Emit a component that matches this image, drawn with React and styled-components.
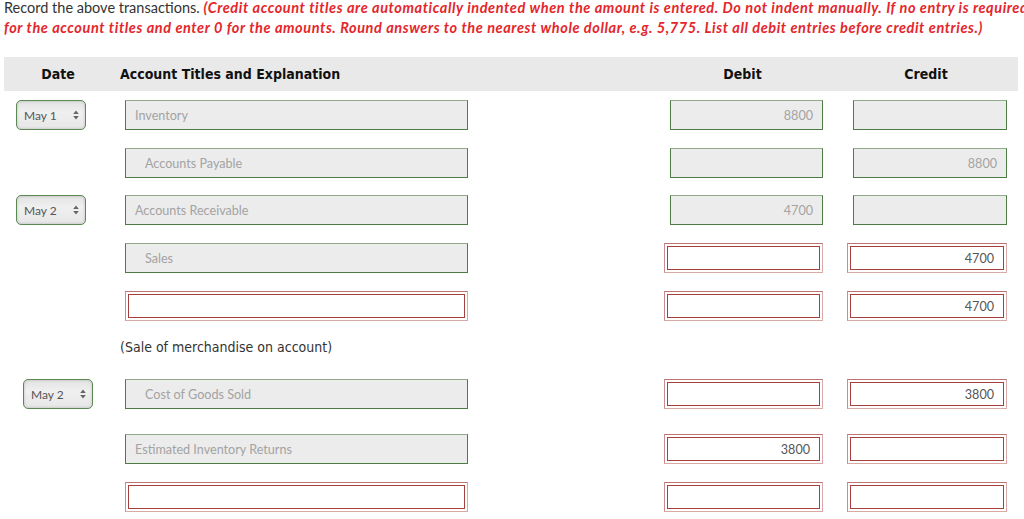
import React from "react";
import styled, { createGlobalStyle } from "styled-components";

const GlobalStyle = createGlobalStyle`
  body {
    margin: 0;
    background: #ffffff;
    font-family: Lato, "Open Sans", sans-serif;
  }
`;

const Page = styled.main`
  width: 1024px;
  height: 519px;
  overflow: hidden;
  padding: 0 0 0 4px;
  box-sizing: border-box;
`;

const Instructions = styled.p`
  margin: -2px 0 0;
  font-size: 14.5px;
  line-height: 20px;
  color: #333;
  white-space: nowrap;
`;

const Warning = styled.span`
  color: #e4262b;
  font-style: italic;
  font-weight: bold;
  letter-spacing: 0.58px;
`;

const Grid = styled.div`
  display: grid;
  grid-template-columns: 116px 360px 352px 186px;
  width: 1014px;
`;

const HeaderBar = styled(Grid)`
  margin-top: 19px;
  height: 34px;
  background: #e9e9e9;
  align-items: center;
  font-family: "DejaVu Sans Condensed", "DejaVu Sans", sans-serif;
  font-weight: bold;
  font-size: 14px;
  color: #111;
`;

const HeadCell = styled.div`
  display: flex;
  justify-content: ${(p) => p.$justify || "flex-start"};
  padding: ${(p) => p.$pad || "0"};
`;

const HeadLabel = styled.span`
  width: ${(p) => p.$w || "auto"};
  text-align: center;
`;

const Row = styled(Grid)`
  margin-top: ${(p) => p.$top}px;
  height: 30px;
  align-items: stretch;
`;

const Cell = styled.div`
  display: flex;
  justify-content: ${(p) => (p.$end ? "flex-end" : "flex-start")};
  padding: ${(p) => p.$pad || "0"};
`;

const DateSelect = styled.div`
  margin-left: ${(p) => p.$left}px;
  width: 70px;
  box-sizing: border-box;
  border: 1px solid #5c8a53;
  border-radius: 5px;
  background: linear-gradient(#e2e2e2, #f0f0f0 40%, #e6e6e6);
  box-shadow: inset 0 0 3px rgba(0, 0, 0, 0.2);
  display: flex;
  align-items: center;
  justify-content: space-between;
  padding: 0 6px 0 7px;
  font-size: 12px;
  color: #555;
`;

const Arrows = styled.svg`
  width: 6px;
  height: 10px;
`;

const GreenBox = styled.div`
  width: ${(p) => p.$w}px;
  box-sizing: border-box;
  background: #ececec;
  border: 1px solid #4d7c44;
  border-top-color: #8fab89;
  display: flex;
  align-items: center;
  justify-content: ${(p) => (p.$right ? "flex-end" : "flex-start")};
  padding: ${(p) => (p.$right ? "0 9px 0 0" : p.$indent ? "0 0 0 19px" : "0 0 0 9px")};
  font-size: 12.6px;
  color: #a3a3a3;
`;

const RedOuter = styled.div`
  width: ${(p) => p.$w}px;
  box-sizing: border-box;
  border: 1px solid #d9a8a8;
  border-top-color: #bf7474;
  border-left-color: #cc8c8c;
  padding: 2px;
  display: flex;
`;

const RedInner = styled.div`
  flex: 1;
  border: 1px solid #a5403d;
  display: flex;
  align-items: center;
  justify-content: flex-end;
  padding-right: 9px;
  font-size: 12.6px;
  color: #555;
`;

const Explanation = styled.div`
  margin: 16px 0 0 116px;
  height: 20px;
  line-height: 20px;
  font-family: "DejaVu Sans Condensed", "DejaVu Sans", sans-serif;
  font-size: 14px;
  color: #333;
`;

const Amount = ({ kind, value, w, wr }) =>
  kind === "red" ? (
    <RedOuter $w={wr}>
      <RedInner>{value}</RedInner>
    </RedOuter>
  ) : (
    <GreenBox $w={w} $right>
      {value}
    </GreenBox>
  );

const Title = ({ kind, text, indent }) =>
  kind === "red" ? (
    <RedOuter $w={343}>
      <RedInner>{text}</RedInner>
    </RedOuter>
  ) : (
    <GreenBox $w={343} $indent={indent}>
      {text}
    </GreenBox>
  );

const rows = [
  { top: 9, date: "May 1", dl: 12, title: "Inventory", debit: ["green", "8800"], credit: ["green", ""] },
  { top: 18, title: "Accounts Payable", indent: true, debit: ["green", ""], credit: ["green", "8800"] },
  { top: 17, date: "May 2", dl: 12, title: "Accounts Receivable", debit: ["green", "4700"], credit: ["green", ""] },
  { top: 18, title: "Sales", indent: true, debit: ["red", ""], credit: ["red", "4700"] },
  { top: 18, titleKind: "red", debit: ["red", ""], credit: ["red", "4700"] },
  { explanation: "(Sale of merchandise on account)" },
  { top: 22, date: "May 2", dl: 19, title: "Cost of Goods Sold", indent: true, debit: ["red", ""], credit: ["red", "3800"] },
  { top: 25, title: "Estimated Inventory Returns", debit: ["red", "3800"], credit: ["red", ""] },
  { top: 18, titleKind: "red", debit: ["red", ""], credit: ["red", ""] },
];

export default function App() {
  return (
    <Page>
      <GlobalStyle />
      <Instructions>
        Record the above transactions.{" "}
        <Warning>
          (Credit account titles are automatically indented when the amount is entered. Do not indent manually. If no entry is required
        </Warning>
        <br />
        <Warning>
          for the account titles and enter 0 for the amounts. Round answers to the nearest whole dollar, e.g. 5,775. List all debit entries before credit entries.)
        </Warning>
      </Instructions>

      <HeaderBar>
        <HeadCell $justify="center" $pad="0 8px 0 0">Date</HeadCell>
        <HeadCell>Account Titles and Explanation</HeadCell>
        <HeadCell $justify="flex-end" $pad="0 16px 0 0">
          <HeadLabel $w="147px">Debit</HeadLabel>
        </HeadCell>
        <HeadCell $justify="flex-end" $pad="0 11px 0 0">
          <HeadLabel $w="162px">Credit</HeadLabel>
        </HeadCell>
      </HeaderBar>

      {rows.map((r, i) =>
        r.explanation ? (
          <Explanation key={i}>{r.explanation}</Explanation>
        ) : (
          <Row key={i} $top={r.top}>
            <Cell>
              {r.date && (
                <DateSelect $left={r.dl}>
                  {r.date}
                  <Arrows viewBox="0 0 6 10">
                    <path d="M3 0.5 L5.8 4 H0.2 Z M3 9.5 L5.8 6 H0.2 Z" fill="#666" />
                  </Arrows>
                </DateSelect>
              )}
            </Cell>
            <Cell $pad="0 0 0 5px">
              <Title kind={r.titleKind || "green"} text={r.title} indent={r.indent} />
            </Cell>
            <Cell $end $pad="0 9px 0 0">
              <Amount kind={r.debit[0]} value={r.debit[1]} w={153} wr={159} />
            </Cell>
            <Cell $end $pad="0 11px 0 0">
              <Amount kind={r.credit[0]} value={r.credit[1]} w={154} wr={160} />
            </Cell>
          </Row>
        )
      )}
    </Page>
  );
}
